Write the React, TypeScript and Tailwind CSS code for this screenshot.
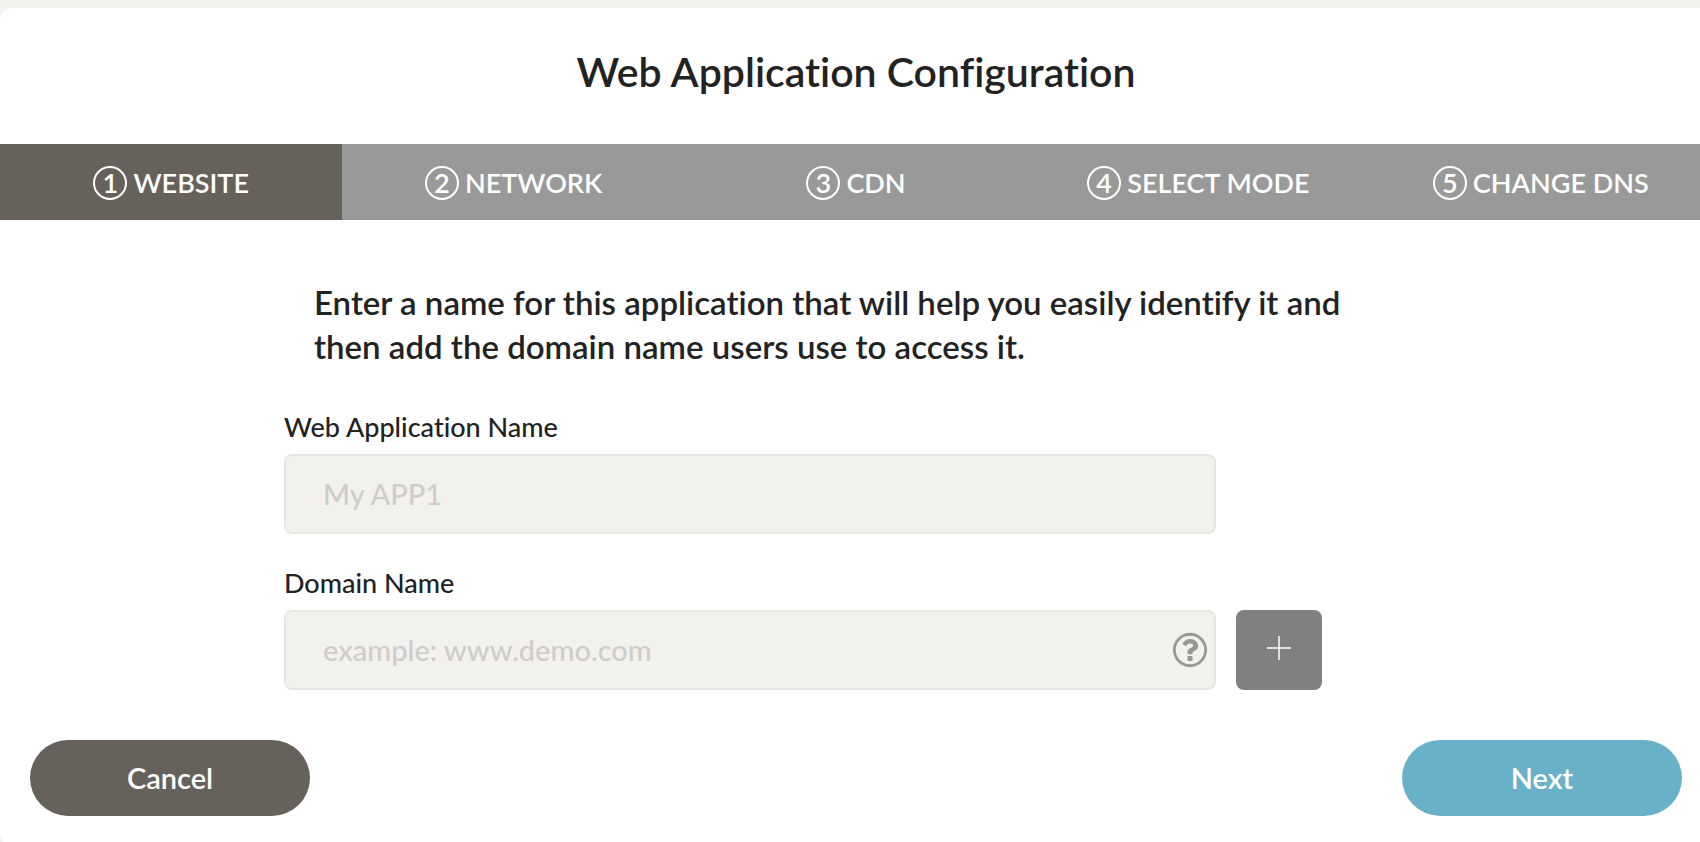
const steps = ["WEBSITE", "NETWORK", "CDN", "SELECT MODE", "CHANGE DNS"];

const labelClass = "block h-11 pt-px text-[27px] leading-8 font-medium";

const inputClass =
  "h-20 w-full rounded-lg border-2 border-[#e6e6e2] bg-[#f3f1ed] pb-0.5 pl-[37px] pr-16 text-[29px] font-medium text-[#222] placeholder:text-[#cfcdc9] outline-none";

const pillClass = "h-[76px] w-[280px] rounded-full text-[29px] font-semibold text-white";

function QuestionIcon() {
  return (
    <svg width="40" height="40" viewBox="0 0 1792 1792" fill="currentColor" aria-hidden="true">
      <path d="M1008 1200v160q0 14-9 23t-23 9h-160q-14 0-23-9t-9-23v-160q0-14 9-23t23-9h160q14 0 23 9t9 23zm256-496q0 50-15 90t-45.5 69-52 44-59.5 36q-32 18-46.5 28t-26 24-11.5 29v32q0 14-9 23t-23 9h-160q-14 0-23-9t-9-23v-68q0-35 10.5-64.5t24-47.5 39-35.5 41-25.5 44.5-21q53-25 75-43t22-49q0-42-43.5-71.5t-95.5-29.5q-56 0-95 27-29 20-80 83-9 12-25 12-11 0-19-6l-108-82q-10-7-12-20t5-23q122-192 349-192 129 0 238.5 89.5t109.5 214.5zm-368-448q-130 0-248.5 51t-204 136.5-136.5 204-51 248.5 51 248.5 136.5 204 204 136.5 248.5 51 248.5-51 204-136.5 136.5-204 51-248.5-51-248.5-136.5-204-204-136.5-248.5-51zm768 640q0 209-103 385.5t-279.5 279.5-385.5 103-385.5-103-279.5-279.5-103-385.5 103-385.5 279.5-279.5 385.5-103 385.5 103 279.5 279.5 103 385.5z" />
    </svg>
  );
}

export default function App() {
  return (
    <div className="h-screen overflow-hidden bg-[#f3f2ee] pt-2 font-['Lato',sans-serif] text-[#222] [font-variant-ligatures:no-common-ligatures]">
      <main className="w-[calc(100%+12px)] rounded-xl bg-white pb-[30px]">
        <h1 className="flex h-[136px] items-center justify-center pb-2 text-[41px] font-semibold">
          Web Application Configuration
        </h1>
        <nav className="grid grid-cols-5 bg-[#999]">
          {steps.map((step, i) => (
            <a
              key={step}
              href="#"
              aria-current={i === 0 ? "step" : undefined}
              className={`flex h-[76px] items-center justify-center gap-1.5 pt-0.5 text-[27px] font-semibold text-white ${i === 0 ? "bg-[#67615b]" : ""}`}
            >
              <span className="flex size-[34px] items-center justify-center rounded-full border-2 border-white">
                {i + 1}
              </span>
              {step}
            </a>
          ))}
        </nav>
        <form className="px-[284px] pt-[60px]">
          <p className="w-[1080px] pl-[30px] text-[33px] leading-[44px] font-semibold">
            Enter a name for this application that will help you easily identify it and then add the
            domain name users use to access it.
          </p>
          <div className="mt-[42px] w-[932px]">
            <label htmlFor="app-name" className={labelClass}>
              Web Application Name
            </label>
            <input id="app-name" type="text" placeholder="My APP1" className={inputClass} />
          </div>
          <div className="mt-8">
            <label htmlFor="domain" className={labelClass}>
              Domain Name
            </label>
            <div className="flex gap-5">
              <div className="relative w-[932px]">
                <input id="domain" type="text" placeholder="example: www.demo.com" className={inputClass} />
                <button type="button" aria-label="Help" className="absolute top-5 right-1.5 text-[#999795]">
                  <QuestionIcon />
                </button>
              </div>
              <button
                type="button"
                aria-label="Add domain"
                className="flex h-20 w-[86px] items-center justify-center rounded-lg bg-[#808080] pb-1 text-white"
              >
                <svg width="24" height="24" viewBox="0 0 24 24" stroke="currentColor" strokeWidth="1.5">
                  <path d="M12 0v24M0 12h24" />
                </svg>
              </button>
            </div>
          </div>
        </form>
        <footer className="mt-[50px] flex justify-between px-[30px]">
          <button type="button" className={`${pillClass} bg-[#67615b]`}>
            Cancel
          </button>
          <button type="button" className={`${pillClass} bg-[#69b1c9]`}>
            Next
          </button>
        </footer>
      </main>
    </div>
  );
}
